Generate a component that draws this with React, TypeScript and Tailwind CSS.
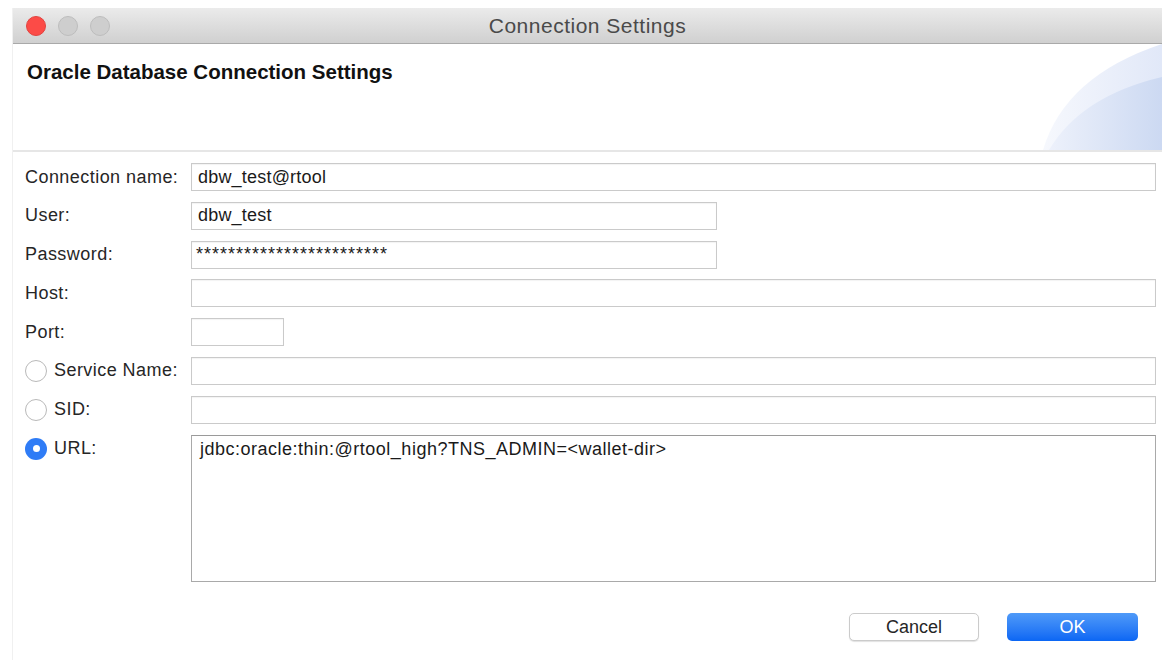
import React from 'react';

const font = { fontFamily: '"Liberation Sans", Arial, sans-serif' };

function Light({ color }: { color: 'red' | 'gray' }) {
  return (
    <span
      className={
        color === 'red'
          ? 'block w-[20px] h-[20px] rounded-full bg-[#fc4b47] border border-[#e2433f]'
          : 'block w-[20px] h-[20px] rounded-full bg-[#cecece] border border-[#bdbdbd]'
      }
    />
  );
}

function Radio({ checked }: { checked?: boolean }) {
  if (checked) {
    return (
      <span className="w-[22px] h-[22px] rounded-full bg-[#2f7cf6] flex items-center justify-center shrink-0">
        <span className="w-[7px] h-[7px] rounded-full bg-white" />
      </span>
    );
  }
  return <span className="w-[22px] h-[22px] rounded-full bg-white border border-[#b9b9b9] shrink-0" />;
}

function Field({ value, width, secret }: { value?: string; width: string; secret?: boolean }) {
  return (
    <div
      className={`${width} h-[28px] border border-[#cacaca] shadow-[inset_0_1px_1px_rgba(0,0,0,0.05)] bg-white flex items-center text-[18px] text-[#1a1a1a] whitespace-nowrap overflow-hidden ${
        secret ? 'pl-[4px] tracking-[1px]' : 'pl-[6px] tracking-[0.2px]'
      }`}
    >
      {value}
    </div>
  );
}

function Row({ label, radio, children }: { label: string; radio?: 'on' | 'off'; children: React.ReactNode }) {
  return (
    <div className="flex items-center h-[28px]">
      <div className="w-[166px] flex items-center gap-[7px] text-[18px] tracking-[0.45px] text-[#262626]">
        {radio && <Radio checked={radio === 'on'} />}
        <span>{label}</span>
      </div>
      {children}
    </div>
  );
}

export default function App() {
  return (
    <div className="w-[1171px] h-[660px] bg-white pl-[12px] pt-[8px] overflow-hidden" style={font}>
      <div className="w-[1150px] h-[652px] bg-white border-l border-[#f0f0f0] flex flex-col">
        {/* title bar */}
        <div className="h-[36px] shrink-0 bg-gradient-to-b from-[#ebebeb] to-[#d0d0d0] border-b border-[#a9a9a9] flex items-center pl-[13px] relative">
          <div className="flex items-center gap-[12px]">
            <Light color="red" />
            <Light color="gray" />
            <Light color="gray" />
          </div>
          <div className="absolute inset-0 flex items-center justify-center text-[21px] tracking-[0.5px] text-[#4a4a4a]">
            Connection Settings
          </div>
        </div>

        {/* header */}
        <div className="h-[108px] shrink-0 flex border-b-2 border-[#e6e6e6]">
          <div className="flex-1 pl-[14px] pt-[13px] text-[20.5px] font-bold text-[#111]">
            Oracle Database Connection Settings
          </div>
          <svg width="119" height="106" viewBox="0 0 119 106" className="shrink-0">
            <defs>
              <linearGradient id="g1" x1="0" y1="0" x2="1" y2="0">
                <stop offset="0" stopColor="#f6f8fd" />
                <stop offset="1" stopColor="#e1e8f8" />
              </linearGradient>
              <linearGradient id="g2" x1="0" y1="0" x2="1" y2="0">
                <stop offset="0" stopColor="#edf1fb" />
                <stop offset="1" stopColor="#ccd9f2" />
              </linearGradient>
            </defs>
            <path d="M0 106 Q 22 32 119 0 L119 106 Z" fill="url(#g1)" />
            <path d="M6 106 Q 38 52 119 33 L119 106 Z" fill="url(#g2)" />
          </svg>
        </div>

        {/* form */}
        <div className="flex flex-col gap-[10.8px] pl-[12px] pr-[6px] pt-[11px]">
          <Row label="Connection name:">
            <Field value="dbw_test@rtool" width="flex-1" />
          </Row>
          <Row label="User:">
            <Field value="dbw_test" width="w-[526px]" />
          </Row>
          <Row label="Password:">
            <Field value="************************" width="w-[526px]" secret />
          </Row>
          <Row label="Host:">
            <Field width="flex-1" />
          </Row>
          <Row label="Port:">
            <Field width="w-[93px]" />
          </Row>
          <Row label="Service Name:" radio="off">
            <Field width="flex-1" />
          </Row>
          <Row label="SID:" radio="off">
            <Field width="flex-1" />
          </Row>
          <div className="flex items-start">
            <div className="w-[166px] h-[28px] flex items-center gap-[7px] text-[18px] tracking-[0.45px] text-[#262626]">
              <Radio checked />
              <span>URL:</span>
            </div>
            <div className="flex-1 h-[147px] border border-[#a9a9a9] border-t-[#9a9a9a] bg-white px-[8px] pt-0 text-[18px] tracking-[0.5px] text-[#1a1a1a]">
              jdbc:oracle:thin:@rtool_high?TNS_ADMIN=&lt;wallet-dir&gt;
            </div>
          </div>
        </div>

        {/* buttons */}
        <div className="flex justify-end gap-[28px] pr-[24px] mt-[31px]">
          <button className="w-[130px] h-[28px] rounded-[5px] bg-white border border-[#cbcbcb] shadow-[0_1px_1px_rgba(0,0,0,0.12)] text-[18px] text-[#262626]">
            Cancel
          </button>
          <button className="w-[131px] h-[28px] rounded-[5px] bg-gradient-to-b from-[#4f9af8] to-[#0a66f4] text-[18px] text-white pt-[1px]">
            OK
          </button>
        </div>
      </div>
    </div>
  );
}
